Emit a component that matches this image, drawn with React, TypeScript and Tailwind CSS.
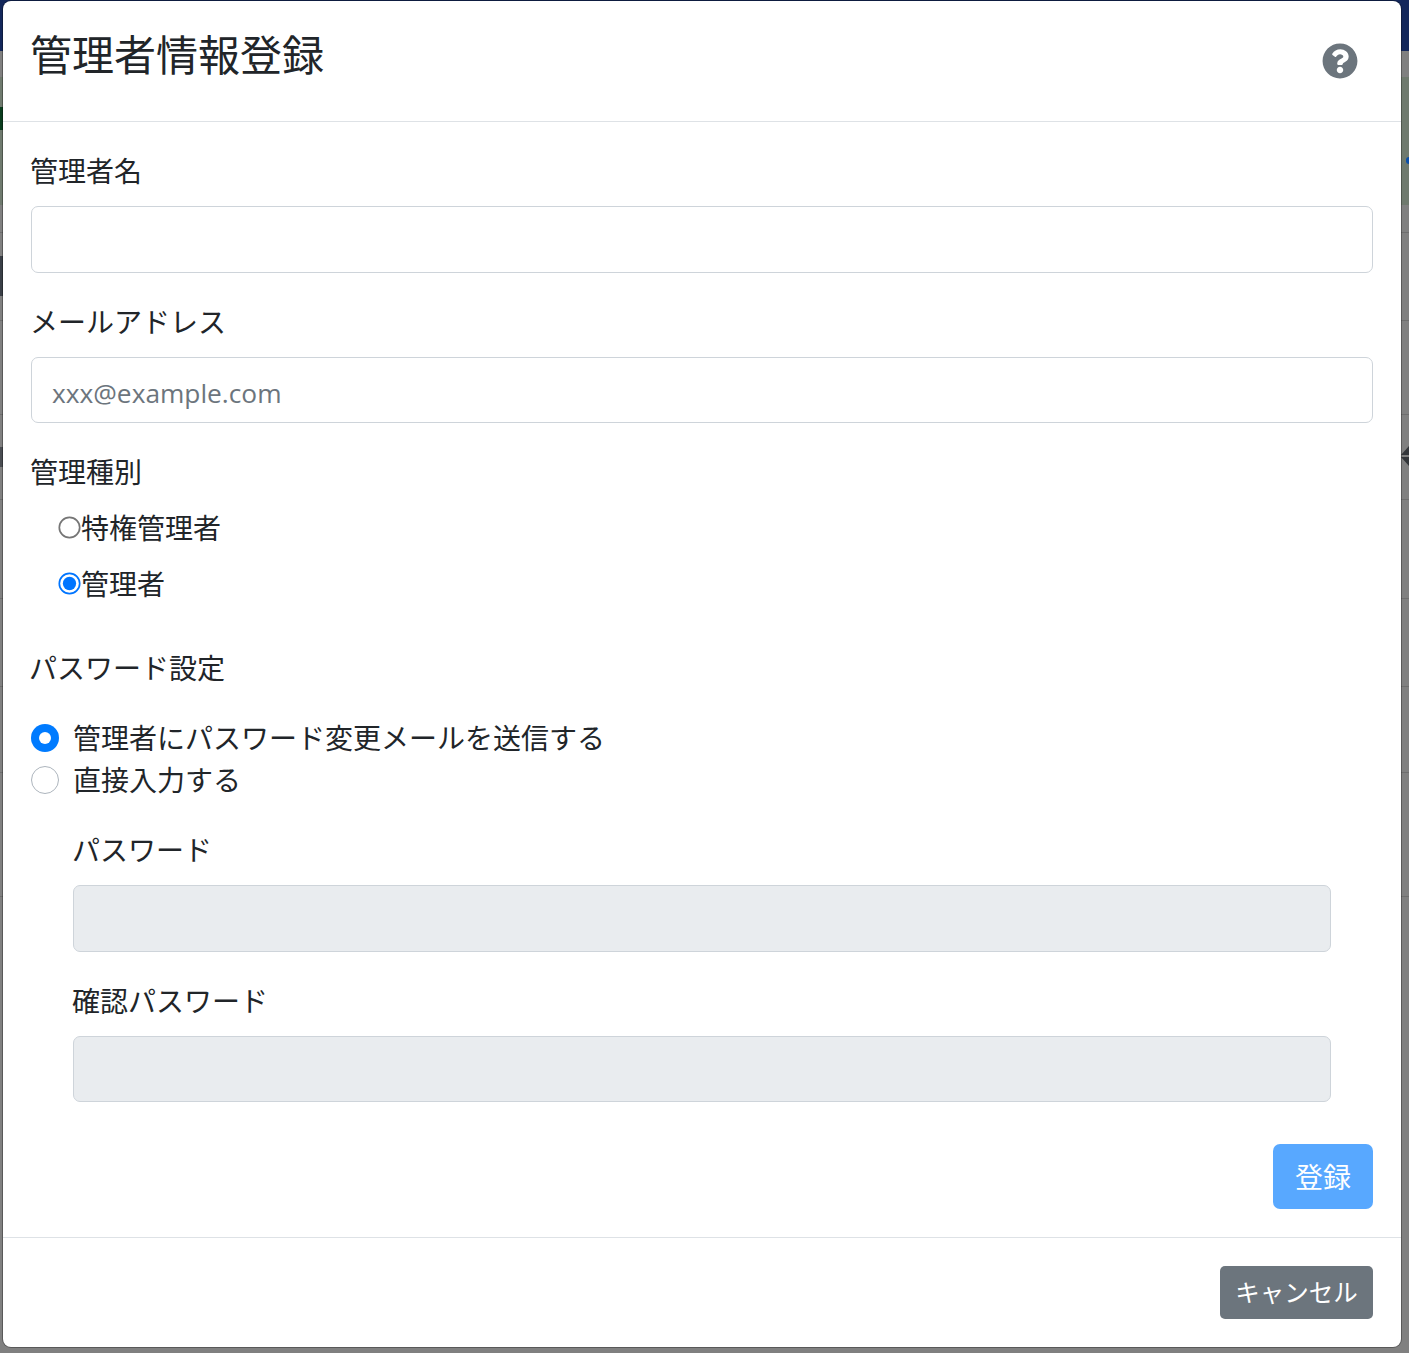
import { FaQuestionCircle } from "react-icons/fa"

const fieldLabel = "block -ml-px text-[28px] leading-[42px] mb-[14px]"
const textInput = "block w-full pt-[4px] pl-[20px] pr-[21px] border border-[#ced4da] rounded-[7px] text-[28px] bg-white placeholder:text-[#6c757d] placeholder:text-[26.3px] disabled:bg-[#e9ecef]"

// dimmed page behind the modal
function Backdrop() {
  return (
    <div className="relative flex flex-col h-[1353px] bg-[#808080]">
      <div className="h-[51px] bg-[#13275b]" />
      <div className="h-[26px] bg-[#808080]" />
      <div className="h-[128px] bg-[#6f7a6e]">
        <div className="w-[3px] h-[23px] mt-[30px] bg-[#0b3d1e]" />
      </div>
      <div className="h-[28px] border-b border-[#6e6e6e]" />
      <div className="h-[88px] border-b border-[#6e6e6e]" />
      <div className="h-[94px] border-b border-[#6e6e6e]" />
      <div className="h-[85px] border-b border-[#6e6e6e]" />
      <div className="h-[99px] border-b border-[#6e6e6e]" />
      <div className="h-[88px] border-b border-[#6e6e6e]" />
      <div className="h-[86px] border-b border-[#6e6e6e]" />
      <div className="h-[124px] border-b border-[#6e6e6e]" />

      {/* bits of the page that show past the modal edges */}
      <div className="absolute left-0 top-[256px] w-[3px] h-[40px] bg-[#3a3f47]" />
      <div className="absolute left-0 top-[447px] w-[3px] h-[20px] bg-[#4a4d52]" />
      <div className="absolute right-0 top-[157px] w-[3px] h-[7px] rounded-l-full bg-[#0b4fa8]" />
      <svg className="absolute right-0 top-[446px]" width="8" height="20" viewBox="0 0 8 20">
        <path d="M8 0 L0 9 H8 Z M8 11 H0 L8 20 Z" fill="#33363a" />
      </svg>
    </div>
  )
}

function NativeRadio({ label, checked }: { label: string; checked?: boolean }) {
  return (
    <label className="flex items-center h-[42px] mb-[14px] pl-[28px] text-[28px] leading-[42px]">
      <input type="radio" name="kind" defaultChecked={checked} className="w-[13px] h-[13px] scale-[1.7] ml-[3.5px] mr-[5.5px] -mt-[1px]" />
      {label}
    </label>
  )
}

function CustomRadio({ label, checked }: { label: string; checked?: boolean }) {
  return (
    <div className="flex items-center h-[42px] text-[28px] leading-[42px]">
      {checked ? (
        <span className="flex items-center justify-center w-[28px] h-[28px] rounded-full bg-[#007bff]">
          <span className="w-[12px] h-[12px] rounded-full bg-white" />
        </span>
      ) : (
        <span className="w-[28px] h-[28px] rounded-full border border-[#adb5bd] bg-white" />
      )}
      <span className="ml-[14px]">{label}</span>
    </div>
  )
}

export default function App() {
  return (
    <div className="relative h-[1353px] overflow-hidden font-['Open_Sans','Noto_Sans_CJK_JP',sans-serif] text-[#212529]">
      <Backdrop />

      <div className="absolute left-[3px] top-[1px] w-[1398px] h-[1346px] flex flex-col bg-white rounded-[8px] ring-1 ring-black/30">
        <div className="flex items-center justify-between h-[121px] px-[28px] border-b border-[#dee2e6]">
          <h5 className="text-[42px] leading-[63px] -mt-[14px] -ml-[1px]">管理者情報登録</h5>
          <FaQuestionCircle className="w-[36px] h-[36px] mr-[15px] text-[#6c757d]" />
        </div>

        <div className="flex flex-col h-[1116px] p-[28px] border-b border-[#dee2e6]">
          <label className={fieldLabel}>管理者名</label>
          <input type="text" className={`${textInput} h-[67px]`} />

          <label className={`${fieldLabel} mt-[28px]`}>メールアドレス</label>
          <input type="text" placeholder="xxx@example.com" className={`${textInput} h-[66px]`} />

          <label className={`${fieldLabel} mt-[28px]`}>管理種別</label>
          <NativeRadio label="特権管理者" />
          <NativeRadio label="管理者" checked />

          <label className="block -ml-[2px] text-[28px] leading-[42px] mt-[28px] mb-[28px]">パスワード設定</label>
          <CustomRadio label="管理者にパスワード変更メールを送信する" checked />
          <CustomRadio label="直接入力する" />

          <div className="px-[42px] mt-[28px]">
            <label className={fieldLabel}>パスワード</label>
            <input type="password" disabled className={`${textInput} h-[67px]`} />
            <label className={`${fieldLabel} mt-[28px]`}>確認パスワード</label>
            <input type="password" disabled className={`${textInput} h-[66px]`} />
          </div>

          <div className="flex justify-end mt-[42px]">
            <button disabled className="h-[65.5px] w-[100px] pt-[2px] rounded-[7px] bg-[#007bff] opacity-65 text-white text-[28px] leading-[42px]">
              登録
            </button>
          </div>
        </div>

        <div className="flex justify-end p-[28px]">
          <button className="h-[53px] w-[153px] pt-[1px] rounded-[5px] bg-[#6c757d] text-white text-[24.5px] leading-[36.75px]">
            キャンセル
          </button>
        </div>
      </div>
    </div>
  )
}
